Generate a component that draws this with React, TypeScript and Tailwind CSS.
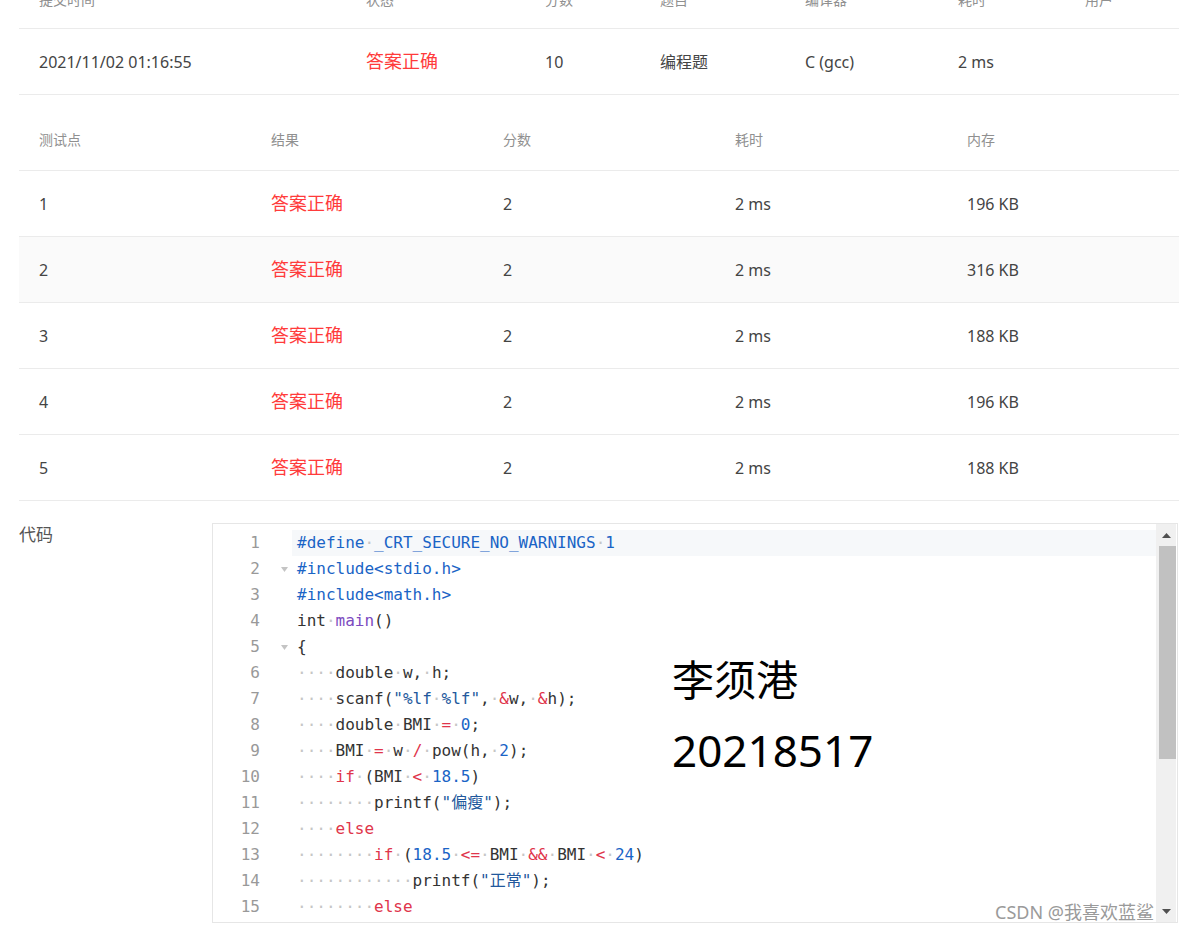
import React from "react";

type Seg = [string, string];

const C = {
  pp: "text-[#1a64c6]",
  df: "text-[#333333]",
  fn: "text-[#7d4bbf]",
  kw: "text-[#e0354b]",
  nm: "text-[#1a64c6]",
  st: "text-[#22589c]",
  dt: "text-[#c6c6c6]",
};

const code: { segs: Seg[]; fold?: boolean }[] = [
  { segs: [["#define", C.pp], ["·", C.dt], ["_CRT_SECURE_NO_WARNINGS", C.pp], ["·", C.dt], ["1", C.pp]] },
  { segs: [["#include<stdio.h>", C.pp]], fold: true },
  { segs: [["#include<math.h>", C.pp]] },
  { segs: [["int", C.df], ["·", C.dt], ["main", C.fn], ["()", C.df]] },
  { segs: [["{", C.df]], fold: true },
  { segs: [["····", C.dt], ["double", C.df], ["·", C.dt], ["w,", C.df], ["·", C.dt], ["h;", C.df]] },
  {
    segs: [
      ["····", C.dt], ["scanf(", C.df], ["\"%lf", C.st], ["·", C.dt], ["%lf\"", C.st], [",", C.df], ["·", C.dt],
      ["&", C.kw], ["w,", C.df], ["·", C.dt], ["&", C.kw], ["h);", C.df],
    ],
  },
  { segs: [["····", C.dt], ["double", C.df], ["·", C.dt], ["BMI", C.df], ["·", C.dt], ["=", C.kw], ["·", C.dt], ["0", C.nm], [";", C.df]] },
  {
    segs: [
      ["····", C.dt], ["BMI", C.df], ["·", C.dt], ["=", C.kw], ["·", C.dt], ["w", C.df], ["·", C.dt], ["/", C.kw], ["·", C.dt],
      ["pow(h,", C.df], ["·", C.dt], ["2", C.nm], [");", C.df],
    ],
  },
  { segs: [["····", C.dt], ["if", C.kw], ["·", C.dt], ["(BMI", C.df], ["·", C.dt], ["<", C.kw], ["·", C.dt], ["18.5", C.nm], [")", C.df]] },
  { segs: [["········", C.dt], ["printf(", C.df], ["\"偏瘦\"", C.st], [");", C.df]] },
  { segs: [["····", C.dt], ["else", C.kw]] },
  {
    segs: [
      ["········", C.dt], ["if", C.kw], ["·", C.dt], ["(", C.df], ["18.5", C.nm], ["·", C.dt], ["<=", C.kw], ["·", C.dt],
      ["BMI", C.df], ["·", C.dt], ["&&", C.kw], ["·", C.dt], ["BMI", C.df], ["·", C.dt], ["<", C.kw], ["·", C.dt], ["24", C.nm], [")", C.df],
    ],
  },
  { segs: [["············", C.dt], ["printf(", C.df], ["\"正常\"", C.st], [");", C.df]] },
  { segs: [["········", C.dt], ["else", C.kw]] },
];

const tests = [
  ["1", "196 KB"],
  ["2", "316 KB"],
  ["3", "188 KB"],
  ["4", "196 KB"],
  ["5", "188 KB"],
];

export default function App() {
  return (
    <div className="relative w-[1182px] h-[930px] overflow-hidden bg-white font-['Noto_Sans','Noto_Sans_CJK_SC',sans-serif] text-[#444]">
      <div className="pl-[19px] pr-[3px]">
        {/* submission table */}
        <div className="mt-[-30px]">
          <div className="grid grid-cols-[327px_179px_115px_145px_153px_127px_114px] h-[59px] items-center border-b border-[#ebebeb] text-[14px] text-[#909090]">
            <div className="pl-[20px]">提交时间</div>
            <div className="pl-[20px]">状态</div>
            <div className="pl-[20px]">分数</div>
            <div className="pl-[20px]">题目</div>
            <div className="pl-[20px]">编译器</div>
            <div className="pl-[20px]">耗时</div>
            <div className="pl-[20px]">用户</div>
          </div>
          <div className="grid grid-cols-[327px_179px_115px_145px_153px_127px_114px] h-[66px] items-center border-b border-[#ebebeb] text-[16px] text-[#444]">
            <div className="pl-[20px]">2021/11/02 01:16:55</div>
            <div className="pl-[20px] text-[18px] text-[#ff3b3b]">答案正确</div>
            <div className="pl-[20px]">10</div>
            <div className="pl-[20px]">编程题</div>
            <div className="pl-[20px]">C (gcc)</div>
            <div className="pl-[20px]">2 ms</div>
            <div className="pl-[20px]"></div>
          </div>
        </div>

        {/* test points table */}
        <div className="mt-[20px]">
          <div className="grid grid-cols-5 h-[56px] pb-[6px] items-center border-b border-[#ebebeb] text-[14px] text-[#909090]">
            <div className="pl-[20px]">测试点</div>
            <div className="pl-[20px]">结果</div>
            <div className="pl-[20px]">分数</div>
            <div className="pl-[20px]">耗时</div>
            <div className="pl-[20px]">内存</div>
          </div>
          {tests.map(([n, mem]) => (
            <div
              key={n}
              className={`grid grid-cols-5 h-[66px] items-center border-b border-[#ebebeb] text-[16px] text-[#444] ${n === "2" ? "bg-[#fafafa]" : "bg-white"}`}
            >
              <div className="pl-[20px]">{n}</div>
              <div className="pl-[20px] text-[18px] text-[#ff3b3b]">答案正确</div>
              <div className="pl-[20px]">2</div>
              <div className="pl-[20px]">2 ms</div>
              <div className="pl-[20px]">{mem}</div>
            </div>
          ))}
        </div>

        {/* code */}
        <div className="mt-[22px] flex">
          <div className="w-[193px] text-[17px] text-[#555] leading-[24px]">代码</div>
          <div className="w-[966px] h-[400px] border border-[#e6e6e6] flex overflow-hidden bg-white">
            <div className="flex-1 pt-[6px] font-['DejaVu_Sans_Mono','Noto_Sans_CJK_SC',monospace] text-[16px]">
              {code.map((ln, i) => (
                <div key={i} className="flex h-[26px] leading-[26px]">
                  <div className="w-[47px] shrink-0 text-right text-[#999]">{i + 1}</div>
                  <div className="w-[32px] shrink-0 flex items-center pl-[21px]">
                    {ln.fold && (
                      <svg width="7" height="5" viewBox="0 0 7 5">
                        <path d="M0 0 L7 0 L3.5 5 Z" fill="#c4c4c4" />
                      </svg>
                    )}
                  </div>
                  <div className={`flex-1 pl-[5px] whitespace-pre ${i === 0 ? "bg-[#f6f8fa]" : ""}`}>
                    {ln.segs.map(([t, c], j) => (
                      <span key={j} className={c}>
                        {t}
                      </span>
                    ))}
                  </div>
                </div>
              ))}
            </div>
            <div className="w-[20px] mr-[1px] bg-[#f0f0f0] flex flex-col items-center">
              <div className="h-[22px] flex items-center justify-center">
                <svg width="9" height="5" viewBox="0 0 9 5">
                  <path d="M0 5 L9 5 L4.5 0 Z" fill="#505050" />
                </svg>
              </div>
              <div className="w-[17px] ml-[2px] h-[213px] bg-[#c1c1c1]" />
              <div className="flex-1" />
              <div className="h-[22px] flex items-center justify-center">
                <svg width="9" height="5" viewBox="0 0 9 5">
                  <path d="M0 0 L9 0 L4.5 5 Z" fill="#505050" />
                </svg>
              </div>
            </div>
          </div>
        </div>
      </div>

      {/* overlay texts */}
      <div className="absolute left-[672px] top-[659px] text-[42px] leading-none text-black">李须港</div>
      <div className="absolute left-[672px] top-[728px] text-[44px] leading-none text-black">20218517</div>
      <div className="absolute left-[995px] top-[899px] text-[18px] leading-[26px] text-[#9a9a9a] [text-shadow:0_0_2px_#ffffff]">
        CSDN @我喜欢蓝鲨
      </div>
    </div>
  );
}
